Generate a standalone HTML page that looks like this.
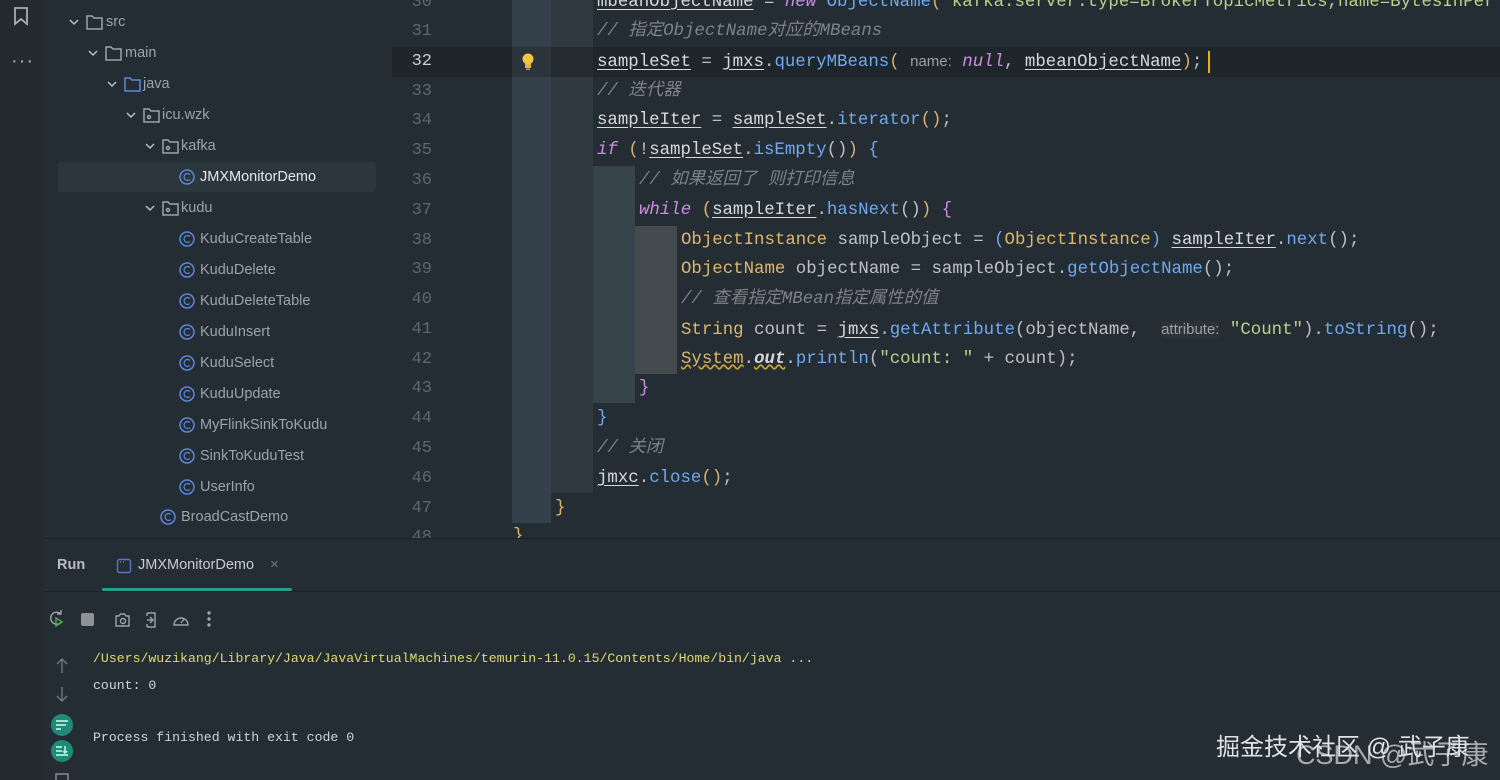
<!DOCTYPE html>
<html><head><meta charset="utf-8"><style>
*{margin:0;padding:0;box-sizing:border-box}
body{width:1500px;height:780px;background:#252d34;position:relative;overflow:hidden;font-family:"Liberation Sans","Noto Sans CJK SC",sans-serif}
.a{position:absolute;white-space:pre}
.strip{left:0;top:0;width:44px;height:780px;background:#232a30}
.t{font-size:14.5px;color:#9aa3ab;line-height:20px}
.code{font-family:"Liberation Mono","Noto Sans CJK SC",monospace;font-size:17.4px;line-height:30px;color:#bcc0c6}
.ln{font-family:"Liberation Mono",monospace;font-size:17px;color:#5d666d;width:40px;text-align:right;left:392px;line-height:30px}
.f{color:#d6d8dc;text-decoration:underline;text-underline-offset:3px}
.m{color:#6ea8f0}
.k{color:#c98ee0;font-style:italic}
.c{color:#7b8289;font-style:italic}
.y{color:#dcb66c}
.s{color:#b9d08a}
.p{color:#d8b070}
.h{font-family:"Liberation Sans",sans-serif;font-size:15px;color:#9aa0a6;font-style:normal}
.con{font-family:"Liberation Mono",monospace;font-size:13.2px;color:#d0d3d6;line-height:20px}
</style></head><body>
<div class="a strip"></div>
<svg class="a" style="left:12px;top:6px" width="18" height="20"><path d="M3 2h12v16l-6-5-6 5z" fill="none" stroke="#a8adb2" stroke-width="1.8"/></svg>
<div class="a" style="left:11px;top:50px;color:#a8adb2;font-size:20px;letter-spacing:1px">···</div>

<div class="a" style="left:58px;top:162px;width:318px;height:30px;background:#2c363d;border-radius:3px"></div>

<svg class="a" style="left:0;top:0" width="390" height="540" fill="none" stroke="#9aa3ab" stroke-width="1.5">
<path d="M70 20l4 4 4-4M89 51l4 4 4-4M108 82l4 4 4-4M127 113l4 4 4-4M146 144l4 4 4-4M146 206l4 4 4-4" stroke="#b9bec3"/>
<path d="M87 16h5l2 2h8v11h-15z"/>
<path d="M106 47h5l2 2h8v11h-15z"/>
<path d="M125 78h5l2 2h8v11h-15z" stroke="#5b86d9"/>
<path d="M144 109h5l2 2h8v11h-15z"/><circle cx="149" cy="117" r="1.5"/>
<path d="M163 140h5l2 2h8v11h-15z"/><circle cx="168" cy="148" r="1.5"/>
<path d="M163 202h5l2 2h8v11h-15z"/><circle cx="168" cy="210" r="1.5"/>
<g stroke="#5b86d9">
<circle cx="187" cy="177" r="7"/><circle cx="187" cy="239" r="7"/><circle cx="187" cy="270" r="7"/><circle cx="187" cy="301" r="7"/><circle cx="187" cy="332" r="7"/><circle cx="187" cy="363" r="7"/><circle cx="187" cy="394" r="7"/><circle cx="187" cy="425" r="7"/><circle cx="187" cy="456" r="7"/><circle cx="187" cy="487" r="7"/><circle cx="168" cy="517" r="7"/>
<g stroke-width="1.2">
<path d="M190 174.5a3.5 3.5 0 1 0 0 5"/><path d="M190 236.5a3.5 3.5 0 1 0 0 5"/><path d="M190 267.5a3.5 3.5 0 1 0 0 5"/><path d="M190 298.5a3.5 3.5 0 1 0 0 5"/><path d="M190 329.5a3.5 3.5 0 1 0 0 5"/><path d="M190 360.5a3.5 3.5 0 1 0 0 5"/><path d="M190 391.5a3.5 3.5 0 1 0 0 5"/><path d="M190 422.5a3.5 3.5 0 1 0 0 5"/><path d="M190 453.5a3.5 3.5 0 1 0 0 5"/><path d="M190 484.5a3.5 3.5 0 1 0 0 5"/><path d="M171 514.5a3.5 3.5 0 1 0 0 5"/>
</g>
</g>
</svg>
<div class="a t" style="left:106px;top:12px">src</div>
<div class="a t" style="left:125px;top:43px">main</div>
<div class="a t" style="left:143px;top:74px">java</div>
<div class="a t" style="left:162px;top:105px">icu.wzk</div>
<div class="a t" style="left:181px;top:136px">kafka</div>
<div class="a t" style="left:200px;top:167px;color:#e6e8ea">JMXMonitorDemo</div>
<div class="a t" style="left:181px;top:198px">kudu</div>
<div class="a t" style="left:200px;top:229px">KuduCreateTable</div>
<div class="a t" style="left:200px;top:260px">KuduDelete</div>
<div class="a t" style="left:200px;top:291px">KuduDeleteTable</div>
<div class="a t" style="left:200px;top:322px">KuduInsert</div>
<div class="a t" style="left:200px;top:353px">KuduSelect</div>
<div class="a t" style="left:200px;top:384px">KuduUpdate</div>
<div class="a t" style="left:200px;top:415px">MyFlinkSinkToKudu</div>
<div class="a t" style="left:200px;top:446px">SinkToKuduTest</div>
<div class="a t" style="left:200px;top:477px">UserInfo</div>
<div class="a t" style="left:181px;top:507px">BroadCastDemo</div>

<div class="a" style="left:392px;top:47px;width:1108px;height:30px;background:#1f262b"></div>
<div class="a" style="left:512px;top:0;width:39px;height:523px;background:#34414a"></div>
<div class="a" style="left:551px;top:0;width:42px;height:493px;background:#2e3940"></div>
<div class="a" style="left:551px;top:47px;width:42px;height:30px;background:#242c31"></div>
<div class="a" style="left:512px;top:47px;width:39px;height:30px;background:#2a343a"></div>
<div class="a" style="left:593px;top:166px;width:42px;height:237px;background:#37434a"></div>
<div class="a" style="left:635px;top:226px;width:42px;height:148px;background:#434b4e"></div>
<svg class="a" style="left:520px;top:52px" width="16" height="20"><circle cx="8" cy="7" r="5.5" fill="#f0c545"/><rect x="5" y="12" width="6" height="4" fill="#e0b53a"/><rect x="6" y="16.5" width="4" height="1.5" fill="#9aa0a6"/></svg>

<div class="a ln" style="top:-12px">30</div>
<div class="a ln" style="top:17px">31</div>
<div class="a ln" style="top:47px;color:#c8ccd0">32</div>
<div class="a ln" style="top:77px">33</div>
<div class="a ln" style="top:106px">34</div>
<div class="a ln" style="top:136px">35</div>
<div class="a ln" style="top:166px">36</div>
<div class="a ln" style="top:196px">37</div>
<div class="a ln" style="top:226px">38</div>
<div class="a ln" style="top:255px">39</div>
<div class="a ln" style="top:285px">40</div>
<div class="a ln" style="top:315px">41</div>
<div class="a ln" style="top:345px">42</div>
<div class="a ln" style="top:374px">43</div>
<div class="a ln" style="top:404px">44</div>
<div class="a ln" style="top:434px">45</div>
<div class="a ln" style="top:464px">46</div>
<div class="a ln" style="top:494px">47</div>
<div class="a ln" style="top:523px">48</div>

<div class="a code" style="left:597px;top:-12px"><span class="f">mbeanObjectName</span> = <span class="k">new</span> <span class="m">ObjectName</span><span class="p">(</span><span class="s">"kafka.server:type=BrokerTopicMetrics,name=BytesInPer</span></div>
<div class="a code" style="left:597px;top:17px"><span class="c">// 指定ObjectName对应的MBeans</span></div>
<div class="a code" style="left:597px;top:47px"><span class="f">sampleSet</span> = <span class="f">jmxs</span>.<span class="m">queryMBeans</span><span class="p">(</span> <span class="h">name:</span> <span class="k">null</span>, <span class="f">mbeanObjectName</span><span class="p">)</span>;</div>
<div class="a" style="left:1208px;top:51px;width:2px;height:22px;background:#f0b400"></div>
<div class="a code" style="left:597px;top:77px"><span class="c">// 迭代器</span></div>
<div class="a code" style="left:597px;top:106px"><span class="f">sampleIter</span> = <span class="f">sampleSet</span>.<span class="m">iterator</span><span class="p">()</span>;</div>
<div class="a code" style="left:597px;top:136px"><span class="k">if</span> <span class="p">(</span>!<span class="f">sampleSet</span>.<span class="m">isEmpty</span>()<span class="p">)</span> <span class="m">{</span></div>
<div class="a code" style="left:639px;top:166px"><span class="c">// 如果返回了 则打印信息</span></div>
<div class="a code" style="left:639px;top:196px"><span class="k">while</span> <span class="y">(</span><span class="f">sampleIter</span>.<span class="m">hasNext</span>()<span class="y">)</span> <span class="k" style="font-style:normal">{</span></div>
<div class="a code" style="left:681px;top:226px"><span class="y">ObjectInstance</span> sampleObject = <span class="m">(</span><span class="y">ObjectInstance</span><span class="m">)</span> <span class="f">sampleIter</span>.<span class="m">next</span>();</div>
<div class="a code" style="left:681px;top:255px"><span class="y">ObjectName</span> objectName = sampleObject.<span class="m">getObjectName</span>();</div>
<div class="a code" style="left:681px;top:285px"><span class="c">// 查看指定MBean指定属性的值</span></div>
<div class="a code" style="left:681px;top:315px"><span class="y">String</span> count = <span class="f">jmxs</span>.<span class="m">getAttribute</span>(objectName,  <span class="h" style="background:#2c3338">attribute:</span> <span class="s">"Count"</span>).<span class="m">toString</span>();</div>
<div class="a code" style="left:681px;top:345px"><span class="y" style="text-decoration:underline wavy #c9a23a">System</span>.<b class="y" style="font-style:italic;color:#d8d8d8;text-decoration:underline wavy #c9a23a">out</b>.<span class="m">println</span>(<span class="s">"count: "</span> + count);</div>
<div class="a code" style="left:639px;top:374px"><span class="k" style="font-style:normal">}</span></div>
<div class="a code" style="left:597px;top:404px"><span class="m">}</span></div>
<div class="a code" style="left:597px;top:434px"><span class="c">// 关闭</span></div>
<div class="a code" style="left:597px;top:464px"><span class="f">jmxc</span>.<span class="m">close</span><span class="p">()</span>;</div>
<div class="a code" style="left:555px;top:494px"><span class="y">}</span></div>
<div class="a code" style="left:513px;top:522px"><span class="y">}</span></div>

<div class="a" style="left:44px;top:538px;width:1456px;height:242px;background:#252d34;border-top:1px solid #1c2227"></div>
<div class="a" style="left:57px;top:557px;font-size:14.5px;font-weight:bold;color:#b9bec3">Run</div>
<svg class="a" style="left:116px;top:558px" width="16" height="16"><rect x="1.5" y="1.5" width="13" height="13" rx="2" fill="none" stroke="#5b76c9" stroke-width="1.4"/><path d="M4 4h1M7 4h1" stroke="#8aa0e0"/></svg>
<div class="a" style="left:138px;top:557px;font-size:14.5px;color:#c8ccd0">JMXMonitorDemo</div>
<div class="a" style="left:270px;top:556px;font-size:15px;color:#6f777e">×</div>
<div class="a" style="left:44px;top:591px;width:1456px;height:1px;background:#1c2227"></div>
<div class="a" style="left:102px;top:588px;width:190px;height:3px;background:#21a08c;border-radius:2px"></div>
<svg class="a" style="left:48px;top:608px" width="180" height="22" fill="none" stroke="#9aa3ab" stroke-width="1.4">
<path d="M13 6a6 6 0 1 0 1 7M13 2v4h-4"/><path d="M8 10l6 4-6 4z" stroke="#4caf50"/>
<rect x="33" y="5" width="13" height="13" rx="2" fill="#8d9298" stroke="none"/>
<path d="M68 8h3l1.5-2h4l1.5 2h3v10h-13z"/><circle cx="75" cy="13" r="2.5"/>
<path d="M99 5h8v14h-8M99 12h6M102 9l3 3-3 3M99 5v3M99 16v3"/>
<path d="M126 17a7 7 0 1 1 14 0z"/><path d="M133 15l3-4"/>
<circle cx="161" cy="5" r="1" fill="#9aa3ab"/><circle cx="161" cy="11" r="1" fill="#9aa3ab"/><circle cx="161" cy="17" r="1" fill="#9aa3ab"/>
</svg>
<svg class="a" style="left:48px;top:655px" width="28" height="125" fill="none" stroke="#6f777e" stroke-width="1.4">
<path d="M14 4v14M9 9l5-5 5 5M14 32v14M9 41l5 5 5-5"/>
<circle cx="14" cy="70" r="11" fill="#1f8a78" stroke="none"/><path d="M8 66h12M8 70h10M8 74h5" stroke="#cfe"/>
<circle cx="14" cy="96" r="11" fill="#1f8a78" stroke="none"/><path d="M8 92h6M8 96h6M8 100h12M17 91v7M15 96l2 2 2-2" stroke="#cfe"/>
<rect x="8" y="119" width="12" height="8" stroke="#8d9298"/>
</svg>
<div class="a con" style="left:93px;top:649px;color:#e0d870">/Users/wuzikang/Library/Java/JavaVirtualMachines/temurin-11.0.15/Contents/Home/bin/java ...</div>
<div class="a con" style="left:93px;top:676px">count: 0</div>
<div class="a con" style="left:93px;top:728px">Process finished with exit code 0</div>

<div class="a" style="left:1296px;top:733px;font-size:27px;color:rgba(210,214,218,0.75)">CSDN @武子康</div>
<div class="a" style="left:1216px;top:727px;font-size:24px;color:#dfe2e5">掘金技术社区 @ 武子康</div>
</body></html>
